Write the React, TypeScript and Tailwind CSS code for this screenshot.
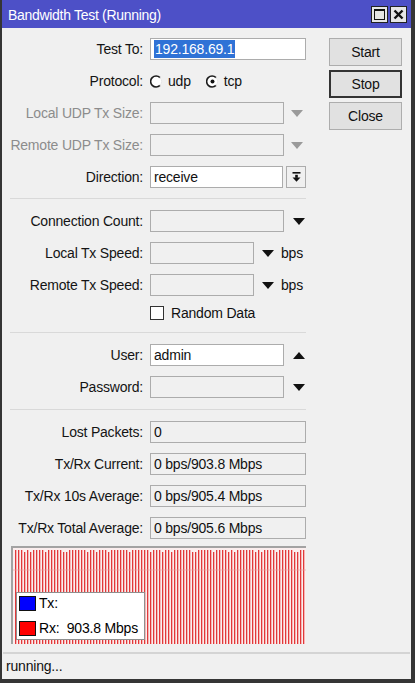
import React from 'react'

const font = { fontFamily: '"Liberation Sans", Arial, sans-serif' }

// Dropdown triangle used beside combo fields
function Arrow({ up, disabled, className = '' }: { up?: boolean; disabled?: boolean; className?: string }) {
  return (
    <svg width="12" height="7" viewBox="0 0 12 7" className={className}>
      <polygon
        points={up ? '0,7 12,7 6,0' : '0,0 12,0 6,7'}
        fill={disabled ? '#9a9a9a' : '#111111'}
      />
    </svg>
  )
}

function Radio({ checked }: { checked?: boolean }) {
  return (
    <svg width="13" height="13" viewBox="0 0 13 13" className="shrink-0">
      <circle cx="6.5" cy="6.5" r="5.5" fill="#ffffff" />
      <path d="M10 2.6 A5.5 5.5 0 1 0 10 10.4" fill="none" stroke="#1c1c1c" strokeWidth="1.6" />
      <path d="M10 2.6 A5.5 5.5 0 0 1 10 10.4" fill="none" stroke="#e6e6e6" strokeWidth="1" />
      {checked && <circle cx="6.5" cy="6.5" r="2" fill="#111111" />}
    </svg>
  )
}

interface RowProps {
  label: string
  disabled?: boolean
  children?: React.ReactNode
}

function Row({ label, disabled, children }: RowProps) {
  return (
    <div className="flex h-[22px] items-center">
      <div className={`w-[141px] shrink-0 text-right ${disabled ? 'text-[#8c8c8c]' : 'text-[#141414]'}`}>{label}</div>
      <div className="ml-[7px] flex h-full items-center">{children}</div>
    </div>
  )
}

function Field({ width, white, children }: { width: string; white?: boolean; children?: React.ReactNode }) {
  return (
    <div
      className={`flex h-[22px] items-center border border-[#acacac] pl-[3px] text-[#111] ${width} ${
        white ? 'bg-white' : 'bg-[#f0f0f0]'
      }`}
    >
      {children}
    </div>
  )
}

function Separator({ top, bottom }: { top: string; bottom: string }) {
  return <div className={`ml-[8px] h-px w-[296px] bg-[#d9d9d9] ${top} ${bottom}`} />
}

function Graph() {
  const lines = []
  for (let i = 0; i < 98; i++) {
    const x = 2 + i * 3
    const top = i % 7 === 3 || i % 11 === 5 ? 4 : 2
    lines.push(<rect key={i} x={x} y={top} width="1.3" height={97 - top} fill="#e2383a" />)
  }
  return (
    <div className="relative ml-[9px] mt-[7px] h-[98px] w-[295px] border-l-2 border-t-2 border-[#a3a3a3] bg-[#fdf4f4]">
      <svg width="293" height="96" viewBox="0 0 293 96" className="absolute left-0 top-0">
        <rect x="0" y="0" width="293" height="96" fill="#fbeeee" />
        {lines}
        <line x1="0" y1="22" x2="293" y2="22" stroke="#e9a0a0" strokeWidth="0.6" />
      </svg>
      <div className="absolute left-[3px] top-[44px] flex h-[48px] w-[129px] flex-col justify-center gap-[4px] border border-[#8f8f8f] bg-white pl-[2px]">
        <div className="flex items-center gap-[3px]">
          <div className="h-[15px] w-[17px] border border-[#111] bg-[#0000ff]" />
          <span>Tx:</span>
        </div>
        <div className="flex items-center gap-[3px]">
          <div className="h-[15px] w-[17px] border border-[#111] bg-[#ff0000]" />
          <span className="whitespace-pre">Rx:  903.8 Mbps</span>
        </div>
      </div>
    </div>
  )
}

function WinButton({ label, focused }: { label: string; focused?: boolean }) {
  return (
    <div
      className={`flex h-[28px] w-[73px] items-center justify-center bg-[#e1e1e1] text-[#111] ${
        focused ? 'border-2 border-[#333333]' : 'border border-[#adadad]'
      }`}
    >
      {label}
    </div>
  )
}

export default function App() {
  return (
    <div
      className="flex h-[683px] w-[415px] flex-col overflow-hidden border-b-4 border-l-2 border-r-4 border-[#353535] bg-[#f0f0f0] text-[14px] tracking-[-0.2px]"
      style={font}
    >
      {/* Title bar */}
      <div className="flex h-[28px] shrink-0 items-center bg-[#4d50c7] pl-[6px] pr-[4px] text-white">
        <span className="flex-1 pt-[2px] tracking-[-0.3px]">Bandwidth Test (Running)</span>
        <div className="flex gap-[2px]">
          <div className="flex h-[17px] w-[17px] items-center justify-center border border-[#222] bg-[#e6e6e6]">
            <div className="h-[11px] w-[11px] border border-t-2 border-[#111]" />
          </div>
          <div className="flex h-[17px] w-[17px] items-center justify-center border border-[#222] bg-[#e6e6e6]">
            <svg width="11" height="11" viewBox="0 0 11 11">
              <path d="M1.5 1.5 L9.5 9.5 M9.5 1.5 L1.5 9.5" stroke="#111" strokeWidth="2.4" />
            </svg>
          </div>
        </div>
      </div>

      <div className="flex flex-1">
        {/* Form column */}
        <div className="flex w-[304px] flex-col pt-[10px]">
          <div className="flex flex-col gap-[10px]">
            <Row label="Test To:">
              <Field width="w-[156px]" white>
                <span className="bg-[#2f72d6] px-[1px] leading-[18px] text-white">192.168.69.1</span>
              </Field>
            </Row>
            <Row label="Protocol:">
              <div className="flex items-center gap-[5px]">
                <Radio />
                <span className="text-[#111]">udp</span>
              </div>
              <div className="ml-[15px] flex items-center gap-[5px]">
                <Radio checked />
                <span className="text-[#111]">tcp</span>
              </div>
            </Row>
            <Row label="Local UDP Tx Size:" disabled>
              <Field width="w-[134px]" />
              <Arrow disabled className="ml-[7px]" />
            </Row>
            <Row label="Remote UDP Tx Size:" disabled>
              <Field width="w-[134px]" />
              <Arrow disabled className="ml-[7px]" />
            </Row>
            <Row label="Direction:">
              <Field width="w-[133px]" white>
                receive
              </Field>
              <div className="ml-[3px] flex h-[22px] w-[20px] items-center justify-center border border-[#acacac] bg-[#f0f0f0]">
                <svg width="9" height="10" viewBox="0 0 9 10">
                  <rect x="0.5" y="0" width="8" height="1.6" fill="#111" />
                  <rect x="3.2" y="2.8" width="2.6" height="3" fill="#111" />
                  <polygon points="0.5,5.4 8.5,5.4 4.5,9.8" fill="#111" />
                </svg>
              </div>
            </Row>
          </div>

          <Separator top="mt-[10px]" bottom="mb-[11px]" />

          <div className="flex flex-col gap-[10px]">
            <Row label="Connection Count:">
              <Field width="w-[134px]" />
              <Arrow className="ml-[9px]" />
            </Row>
            <Row label="Local Tx Speed:">
              <Field width="w-[104px]" />
              <Arrow className="ml-[8px]" />
              <span className="ml-[7px] text-[#111]">bps</span>
            </Row>
            <Row label="Remote Tx Speed:">
              <Field width="w-[104px]" />
              <Arrow className="ml-[8px]" />
              <span className="ml-[7px] text-[#111]">bps</span>
            </Row>
            <div className="ml-[148px] flex h-[14px] items-center gap-[7px]">
              <div className="h-[14px] w-[14px] border border-[#333] bg-white" />
              <span className="text-[#111]">Random Data</span>
            </div>
          </div>

          <Separator top="mt-[12px]" bottom="mb-[11px]" />

          <div className="flex flex-col gap-[10px]">
            <Row label="User:">
              <Field width="w-[134px]" white>
                admin
              </Field>
              <Arrow up className="ml-[9px]" />
            </Row>
            <Row label="Password:">
              <Field width="w-[134px]" />
              <Arrow className="ml-[9px]" />
            </Row>
          </div>

          <Separator top="mt-[11px]" bottom="mb-[11px]" />

          <div className="flex flex-col gap-[10px]">
            <Row label="Lost Packets:">
              <Field width="w-[156px]">0</Field>
            </Row>
            <Row label="Tx/Rx Current:">
              <Field width="w-[156px]">0 bps/903.8 Mbps</Field>
            </Row>
            <Row label="Tx/Rx 10s Average:">
              <Field width="w-[156px]">0 bps/905.4 Mbps</Field>
            </Row>
            <Row label="Tx/Rx Total Average:">
              <Field width="w-[156px]">0 bps/905.6 Mbps</Field>
            </Row>
          </div>

          <Graph />
        </div>

        {/* Buttons column */}
        <div className="ml-[23px] flex flex-col gap-[4px] pt-[10px]">
          <WinButton label="Start" />
          <WinButton label="Stop" focused />
          <WinButton label="Close" />
        </div>
      </div>

      {/* Status bar */}
      <div className="mx-[1px] flex h-[27px] shrink-0 items-center border-t-2 border-[#d4d4d4] pl-[3px] text-[#111]">
        running...
      </div>
    </div>
  )
}
